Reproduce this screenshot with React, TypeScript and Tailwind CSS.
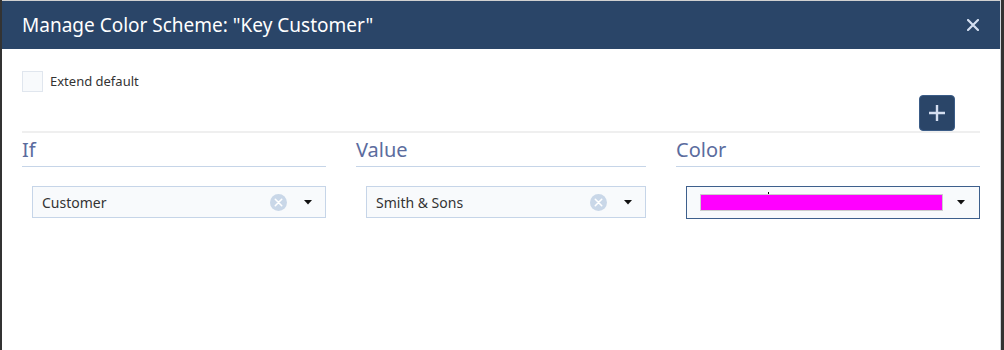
import React from "react";

const font = { fontFamily: '"Segoe UI", "Noto Sans", "Open Sans", sans-serif' };

function Caret() {
  return (
    <svg width="8" height="5" viewBox="0 0 8 5" className="shrink-0">
      <path d="M0 0 L8 0 L4 4.5 Z" fill="#111" />
    </svg>
  );
}

function ClearIcon() {
  return (
    <svg width="17" height="17" viewBox="0 0 17 17" className="shrink-0">
      <circle cx="8.5" cy="8.5" r="8.5" fill="#c9d7e8" />
      <path d="M5.3 5.3 L11.7 11.7 M11.7 5.3 L5.3 11.7" stroke="#fff" strokeWidth="1.6" strokeLinecap="round" />
    </svg>
  );
}

function SelectBox({ text }: { text: string }) {
  return (
    <div className="flex items-center h-[32px] border border-[#c6d5e8] bg-[#f8fafc] pl-[9px] pr-[13px]">
      <span className="flex-1 text-[14px] text-[#333]">{text}</span>
      <ClearIcon />
      <div className="ml-[17px]"><Caret /></div>
    </div>
  );
}

function Column({ title, width, children }: { title: string; width: number; children: React.ReactNode }) {
  return (
    <div style={{ width }} className="shrink-0">
      <div className="h-[34px] border-b border-[#c6d5e8] flex items-start">
        <span className="text-[20px] leading-[34px] text-[#5b6c9e]">{title}</span>
      </div>
      <div className="pl-[10px] pt-[19px]">{children}</div>
    </div>
  );
}

export default function App() {
  return (
    <div style={font} className="w-[1004px] h-[350px] bg-[#333] flex overflow-hidden">
      <div className="ml-[2px] w-[999px] h-[350px] flex flex-col bg-white border-t border-[#d0d0d0] border-r border-r-[#cfd5dc]">
        <div className="h-[48px] bg-[#2a4568] flex items-center pl-[20px] pr-[21px]">
          <span className="flex-1 text-[19px] text-white">Manage Color Scheme: "Key Customer"</span>
          <svg width="12" height="12" viewBox="0 0 12 12">
            <path d="M1 1 L11 11 M11 1 L1 11" stroke="#d4def0" strokeWidth="2.2" strokeLinecap="round" />
          </svg>
        </div>
        <div className="pl-[20px] pr-[20px]">
          <div className="flex items-center mt-[22px] gap-[7px]">
            <div className="w-[21px] h-[21px] border border-[#e0e6ee] bg-[#f8fafc]" />
            <span className="text-[13px] text-[#333]">Extend default</span>
          </div>
          <div className="flex justify-end mt-[3px] pr-[25px]">
            <div className="w-[36px] h-[36px] rounded-[4px] bg-[#2a4568] border border-[#3b5c87] flex items-center justify-center">
              <svg width="18" height="18" viewBox="0 0 18 18">
                <path d="M9 1 V17 M1 9 H17" stroke="#d4def0" strokeWidth="2.4" />
              </svg>
            </div>
          </div>
          <div className="h-[2px] bg-[#efefef] w-[958px]" />
          <div className="flex gap-[30px]">
            <Column title="If" width={304}>
              <SelectBox text="Customer" />
            </Column>
            <Column title="Value" width={290}>
              <SelectBox text="Smith & Sons" />
            </Column>
            <Column title="Color" width={304}>
              <div className="relative flex items-center h-[33px] border border-[#3d5f8c] bg-[#f8fafc] pl-[13px] pr-[14px]">
                <div className="flex-1 h-[17px] bg-[#ff00ff] border border-[#cccccc]" />
                <div className="ml-[14px]"><Caret /></div>
                <div className="absolute left-[81px] top-[5px] w-[1px] h-[2px] bg-black" />
              </div>
            </Column>
          </div>
        </div>
      </div>
    </div>
  );
}
